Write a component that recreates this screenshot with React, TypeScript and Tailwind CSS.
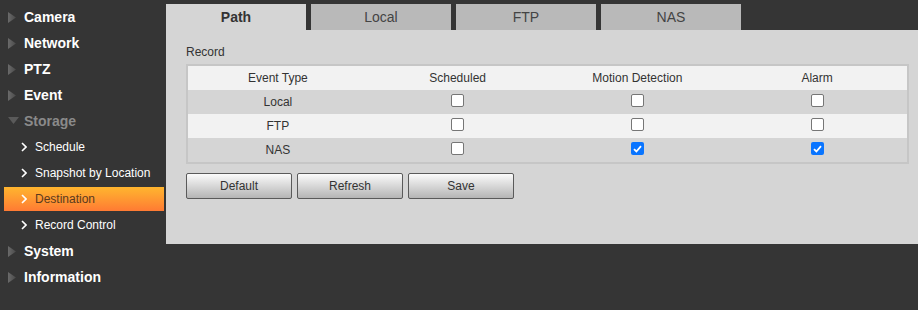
import React from "react";

interface MenuItem {
  label: string;
  open?: boolean;
  children?: string[];
}

const menu: MenuItem[] = [
  { label: "Camera" },
  { label: "Network" },
  { label: "PTZ" },
  { label: "Event" },
  { label: "Storage", open: true, children: ["Schedule", "Snapshot by Location", "Destination", "Record Control"] },
  { label: "System" },
  { label: "Information" },
];

const tabs = ["Path", "Local", "FTP", "NAS"];

const rows = [
  { name: "Local", checks: [false, false, false] },
  { name: "FTP", checks: [false, false, false] },
  { name: "NAS", checks: [false, true, true] },
];

function Triangle({ open }: { open?: boolean }) {
  if (open) {
    return (
      <svg width="12" height="8" viewBox="0 0 12 8" className="shrink-0">
        <path d="M0 0 L11 0 L5.5 7 Z" fill="#5a5a5a" />
      </svg>
    );
  }
  return (
    <svg width="9" height="11" viewBox="0 0 9 11" className="shrink-0">
      <defs>
        <linearGradient id="tri" x1="0" y1="0" x2="1" y2="0">
          <stop offset="0" stopColor="#6a6a6a" />
          <stop offset="1" stopColor="#4a4a4a" />
        </linearGradient>
      </defs>
      <path d="M0 0 L8 5.5 L0 11 Z" fill="url(#tri)" />
    </svg>
  );
}

function Chevron() {
  return (
    <svg width="6" height="10" viewBox="0 0 6 10" className="shrink-0">
      <path d="M1 1 L5 5 L1 9" fill="none" stroke="#ffffff" strokeWidth="1.6" />
    </svg>
  );
}

function Check({ checked }: { checked: boolean }) {
  if (checked) {
    return (
      <span className="w-[13px] h-[13px] rounded-[2px] bg-[#0a75ff] flex items-center justify-center">
        <svg width="9" height="8" viewBox="0 0 9 8">
          <path d="M1 4.2 L3.4 6.5 L8 1.2" fill="none" stroke="#ffffff" strokeWidth="1.8" />
        </svg>
      </span>
    );
  }
  return <span className="w-[13px] h-[13px] rounded-[2px] bg-white border border-[#767676]" />;
}

export default function App() {
  return (
    <div
      className="w-[918px] h-[310px] bg-[#353535] flex overflow-hidden"
      style={{ fontFamily: '"Liberation Sans", Arial, sans-serif' }}
    >
      {/* Sidebar */}
      <div className="w-[166px] shrink-0 pt-[4px]">
        {menu.map((m) => (
          <div key={m.label}>
            <div className="h-[26px] flex items-center pl-[8px]">
              <div className="w-[16px] flex items-center">
                <Triangle open={m.open} />
              </div>
              <span className={`text-[14px] font-bold ${m.open ? "text-[#8a8a8a]" : "text-white"}`}>{m.label}</span>
            </div>
            {m.children?.map((c) => {
              const active = c === "Destination";
              return (
                <div key={c} className="h-[26px] py-[1px] pl-[4px] pr-[2px]">
                  <div
                    className={`h-full flex items-center pl-[17px] gap-[8px] ${
                      active ? "bg-gradient-to-b from-[#ffb52e] to-[#ff7a33]" : ""
                    }`}
                  >
                    <Chevron />
                    <span className={`text-[12px] ${active ? "text-[#5a3a1e]" : "text-white"}`}>{c}</span>
                  </div>
                </div>
              );
            })}
          </div>
        ))}
      </div>

      {/* Content */}
      <div className="flex-1 pt-[4px]">
        <div className="flex gap-[5px] h-[26px]">
          {tabs.map((t, i) => (
            <div
              key={t}
              className={`w-[140px] flex items-center justify-center text-[14px] ${
                i === 0 ? "bg-[#d5d5d5] text-[#333] font-bold" : "bg-[#b9b9b9] text-[#444]"
              }`}
            >
              {t}
            </div>
          ))}
        </div>
        <div className="h-[214px] bg-[#d5d5d5] pl-[20px] pr-[9px] pt-[13px] text-[12px] text-[#333]">
          <div className="h-[21px] text-[#333]">Record</div>
          <div className="border-2 border-[#c6c6c6]">
            <div className="grid grid-cols-4 h-[24px] bg-[#f2f2f2] items-center text-center">
              <div>Event Type</div>
              <div>Scheduled</div>
              <div>Motion Detection</div>
              <div>Alarm</div>
            </div>
            {rows.map((r, i) => (
              <div
                key={r.name}
                className={`grid grid-cols-4 h-[24px] items-center text-center ${i % 2 === 1 ? "bg-[#f2f2f2]" : "bg-[#d5d5d5]"}`}
              >
                <div>{r.name}</div>
                {r.checks.map((c, j) => (
                  <div key={j} className="flex justify-center pb-[3px]">
                    <Check checked={c} />
                  </div>
                ))}
              </div>
            ))}
          </div>
          <div className="flex gap-[5px] mt-[9px]">
            {["Default", "Refresh", "Save"].map((b) => (
              <button
                key={b}
                className="w-[106px] h-[26px] border border-[#5a5a5a] rounded-[2px] bg-gradient-to-b from-[#fbfbfb] to-[#b5b5b5] text-[12px] text-[#333]"
              >
                {b}
              </button>
            ))}
          </div>
        </div>
      </div>
    </div>
  );
}
